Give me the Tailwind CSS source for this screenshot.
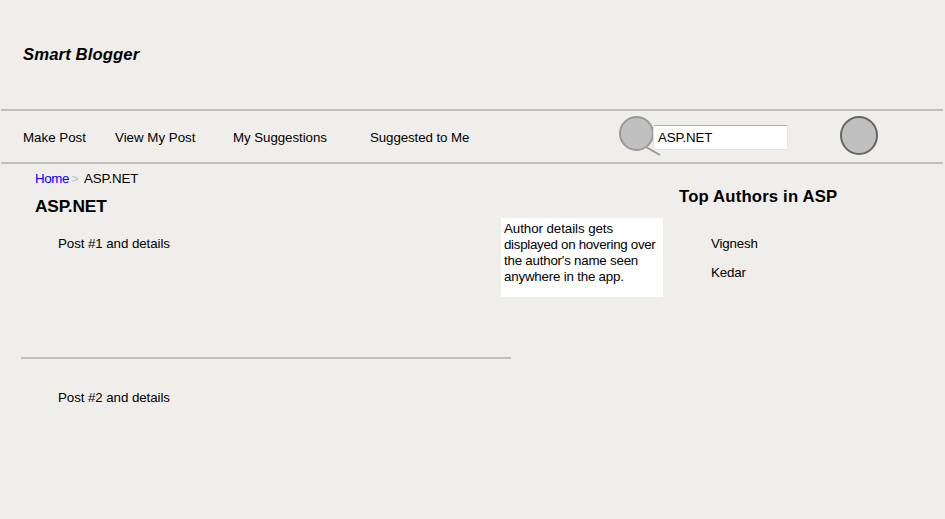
<!DOCTYPE html>
<html lang="en">
<head>
<meta charset="utf-8">
<title>Smart Blogger</title>
<script src="https://cdn.jsdelivr.net/npm/@tailwindcss/browser@4"></script>
</head>
<body class="relative h-[519px] w-[945px] overflow-hidden bg-[#f0eeea] font-['Liberation_Sans',Arial,sans-serif] text-[13.33px] leading-4 tracking-[-0.07px] text-black">
  <header class="mx-px h-[109px] w-[942px] pt-[45px] pl-[22px]">
    <h1 class="text-[16.7px] leading-5 font-bold tracking-[0.1px] italic">Smart Blogger</h1>
  </header>
  <nav class="mx-px flex h-[55px] w-[942px] border-y-2 border-[#c0bfc0] pl-[22px]">
    <a class="mt-[19px] w-[92px] tracking-normal whitespace-nowrap">Make Post</a>
    <a class="mt-[19px] w-[118px] tracking-normal whitespace-nowrap">View My Post</a>
    <a class="mt-[19px] w-[137px] whitespace-nowrap">My Suggestions</a>
    <a class="mt-[19px] w-[248px] tracking-[-0.1px] whitespace-nowrap">Suggested to Me</a>
    <div class="relative mt-[4px] h-[42px] w-[221px]">
      <svg class="absolute top-0 left-0" width="46" height="42" viewBox="0 0 46 42" fill="none" stroke="#999" stroke-width="2">
        <circle cx="18.5" cy="18.5" r="16.5" fill="#c0c0c0"/>
        <path d="M28 32 42 40"/>
      </svg>
      <div class="absolute top-[10px] left-[35px] h-[25px] w-[135px] rounded-xs border border-[#e2e3ea] border-t-[#abadb3] bg-white pt-[4px] pl-[4px] tracking-[-0.15px]">ASP.NET</div>
    </div>
    <svg class="mt-[4px]" width="40" height="40" viewBox="0 0 40 40">
      <ellipse cx="20" cy="20.5" rx="18" ry="18.5" fill="#c0c0c0" stroke="#666" stroke-width="2"/>
    </svg>
  </nav>
  <div class="flex">
    <main class="ml-[21px] w-[490px]">
      <div class="flex pt-[7px] pl-[14px] tracking-[-0.15px]">
        <a class="w-[36px] tracking-[-0.4px] text-[#0000ff]">Home</a>
        <span class="w-[13px] text-[#c0c0c0]">&gt;</span>
        <span>ASP.NET</span>
      </div>
      <h2 class="mt-[9px] pl-[14px] text-[17.3px] leading-5 font-bold tracking-[-0.15px]">ASP.NET</h2>
      <article class="h-[143px] border-b-2 border-[#c0bfc0] pt-[20px] pl-[37px] tracking-[-0.08px]">Post #1 and details</article>
      <article class="pt-[31px] pl-[37px] tracking-[-0.08px]">Post #2 and details</article>
    </main>
    <aside class="ml-[168px] pt-[23px]">
      <h2 class="text-[16.7px] leading-5 font-bold tracking-[0.18px] whitespace-nowrap">Top Authors in ASP</h2>
      <ul class="mt-[29px] flex flex-col gap-[13px] pl-[32px] tracking-[-0.15px]">
        <li>Vignesh</li>
        <li>Kedar</li>
      </ul>
    </aside>
  </div>
  <div class="absolute top-[218px] left-[501px] h-[79px] w-[162px] bg-white pt-[3px] pl-[3px] whitespace-nowrap">Author details gets<br><span class="tracking-[-0.3px]">displayed on hovering over</span><br><span class="tracking-[-0.22px]">the author's name seen</span><br><span class="tracking-[-0.2px]">anywhere in the app.</span></div>
</body>
</html>
